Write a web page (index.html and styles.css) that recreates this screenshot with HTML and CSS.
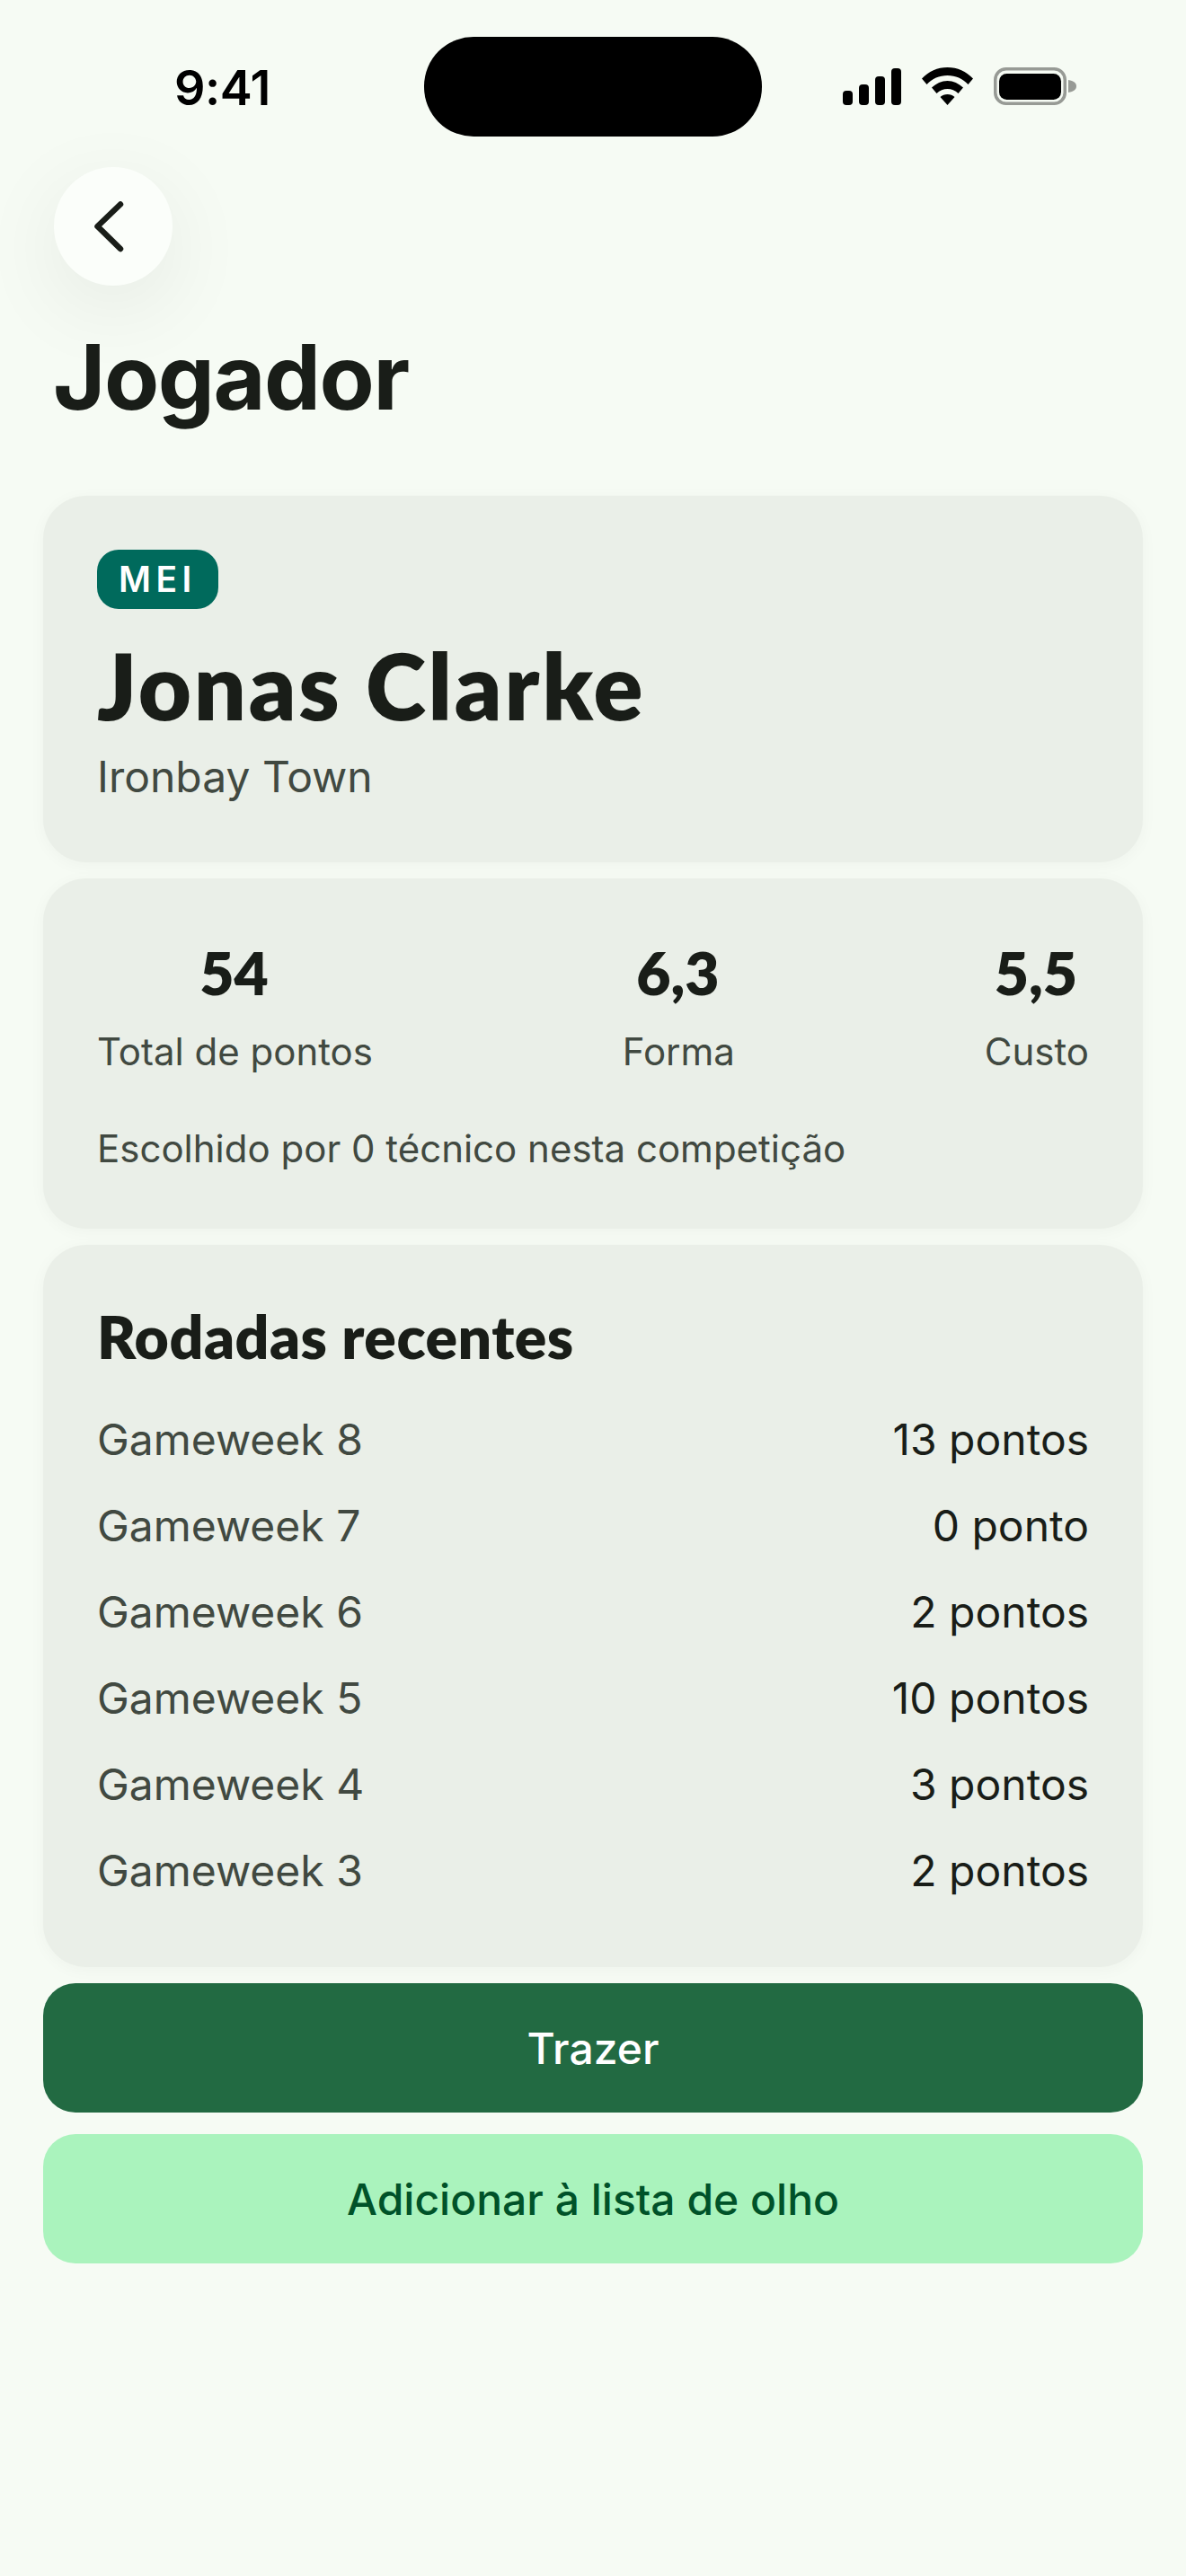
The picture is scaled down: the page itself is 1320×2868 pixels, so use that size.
FILE: index.html
```html
<!DOCTYPE html>
<html lang="pt">
<head>
<meta charset="utf-8">
<title>Jogador</title>
<link rel="stylesheet" href="styles.css">
</head>
<body>
<div class="screen">
  <div class="status">
    <span class="time">9:41</span>
    <div class="island"></div>
    <div class="status-icons">
      <svg width="65" height="41" viewBox="0 0 65 41"><rect x="0" y="25" width="11" height="16" rx="4"/><rect x="18" y="18" width="11" height="23" rx="4"/><rect x="36" y="9" width="11" height="32" rx="4"/><rect x="54" y="0" width="11" height="41" rx="4"/></svg>
      <svg width="57" height="42" viewBox="0 0 57 42"><path d="M28.500 0C39.500 0 49.500 4.500 57 12.500L51.500 19C45.500 12.500 37.500 9 28.500 9S11.500 12.500 5.500 19L0 12.500C7.500 4.500 17.500 0 28.500 0Z"/><path d="M28.500 15C35 15 41 18 46 22.500L40.500 29C37 25.500 33 24 28.500 24S20 25.500 16.500 29L11 22.500C16 18 22 15 28.500 15Z"/><path d="M28.500 30C31.500 30 34.500 31.200 36.500 33L28.500 42L20.500 33C22.500 31.200 25.500 30 28.500 30Z"/></svg>
      <svg width="92" height="42" viewBox="0 0 92 42"><rect x="1.750" y="1.750" width="77.500" height="38.500" rx="12" fill="none" stroke="#979a95" stroke-width="3.500"/><rect x="6" y="7" width="69" height="29" rx="8.500"/><path d="M83 14C89 15 92 17.500 92 21S89 27 83 28Z" fill="#979a95"/></svg>
    </div>
  </div>
  <button class="back" aria-label="Voltar">
    <svg width="48" height="66" viewBox="0 0 48 66"><path d="M32 8.500L6.500 33L32 58" fill="none" stroke="#191d18" stroke-width="6.500" stroke-linecap="round" stroke-linejoin="round"/></svg>
  </button>
  <h1 class="title">Jogador</h1>
  <main class="content">
    <section class="card hero">
      <span class="badge">MEI</span>
      <h2 class="name">Jonas Clarke</h2>
      <p class="club">Ironbay Town</p>
    </section>
    <section class="card stats">
      <div class="stat-row">
        <div class="stat"><strong class="stat-value">54</strong><span class="stat-label">Total de pontos</span></div>
        <div class="stat"><strong class="stat-value">6,3</strong><span class="stat-label">Forma</span></div>
        <div class="stat"><strong class="stat-value">5,5</strong><span class="stat-label">Custo</span></div>
      </div>
      <p class="picked">Escolhido por 0 técnico nesta competição</p>
    </section>
    <section class="card rounds">
      <h3 class="rounds-title">Rodadas recentes</h3>
      <ul class="round-list">
        <li class="round"><span class="round-name">Gameweek 8</span><span class="round-pts">13 pontos</span></li>
        <li class="round"><span class="round-name">Gameweek 7</span><span class="round-pts">0 ponto</span></li>
        <li class="round"><span class="round-name">Gameweek 6</span><span class="round-pts">2 pontos</span></li>
        <li class="round"><span class="round-name">Gameweek 5</span><span class="round-pts">10 pontos</span></li>
        <li class="round"><span class="round-name">Gameweek 4</span><span class="round-pts">3 pontos</span></li>
        <li class="round"><span class="round-name">Gameweek 3</span><span class="round-pts">2 pontos</span></li>
      </ul>
    </section>
    <div class="actions">
      <button class="btn primary">Trazer</button>
      <button class="btn secondary">Adicionar à lista de olho</button>
    </div>
  </main>
</div>
</body>
</html>
```
FILE: styles.css
```css
* { box-sizing: border-box; }
html, body { margin: 0; padding: 0; }
body { background: #f6fbf4; font-family: Inter, "Liberation Sans", sans-serif; color: #191d18; }
.screen { width: 1320px; height: 2868px; overflow: hidden; }
.status { position: relative; height: 186px; display: flex; justify-content: space-between; align-items: flex-start; }
.time { margin: 65px 0 0 194px; font-size: 54px; line-height: 65px; font-weight: 600; letter-spacing: -0.5px; color: #000; }
.island { position: absolute; left: 472px; top: 41px; width: 376px; height: 111px; border-radius: 55px; background: #000; }
.status-icons { display: flex; align-items: flex-end; gap: 23px; margin: 75px 122px 0 0; }
.status-icons svg { display: block; fill: #000; }
.back { display: flex; align-items: center; justify-content: center; width: 132px; height: 132px; margin-left: 60px; padding: 0; border: 0; border-radius: 50%; background: #fbfefa; box-shadow: 0 24px 96px rgba(0,0,0,.07); }
.title { margin: 42px 0 0 59px; font-size: 100px; line-height: 120px; font-weight: 700; letter-spacing: -1.5px; color: #191d18; }
.content { display: flex; flex-direction: column; gap: 18px; margin: 72px 48px 0; }
.card { background: #eaefe8; border-radius: 48px; padding: 60px; box-shadow: 0 3px 18px rgba(0,0,0,.035); }
.badge { display: inline-block; height: 66px; padding: 0 24px; border-radius: 24px; background: #006a5c; color: #fff; font-size: 39px; line-height: 66px; font-weight: 600; letter-spacing: 5.500px; vertical-align: top; }
.hero { height: 408px; }
.name { margin: 31px 0 0; font-family: Lato, sans-serif; font-size: 102px; line-height: 108px; font-weight: 800; letter-spacing: 2.8px; color: #191d18; }
.club { margin: 15px 0 0; font-size: 48px; line-height: 66px; color: #414941; }
.stats { height: 390px; padding-bottom: 0; }
.stat-row { display: flex; justify-content: space-between; }
.stat { display: flex; flex-direction: column; align-items: center; }
.stat-value { margin-left: -2px; font-family: Lato, sans-serif; font-size: 66px; line-height: 90px; font-weight: 800; }
.stat-label { margin-top: 13px; font-size: 42px; line-height: 60px; color: #414941; }
.picked { margin: 48px 0 0; font-size: 42px; line-height: 60px; color: #414941; }
.rounds { height: 804px; }
.rounds-title { margin: 0; font-family: Lato, sans-serif; font-size: 66px; line-height: 84px; font-weight: 800; letter-spacing: 0.5px; }
.round-list { list-style: none; margin: 24px 0 0; padding: 0; }
.round { display: flex; justify-content: space-between; height: 96px; align-items: center; font-size: 48px; }
.round-name { color: #414941; }
.round-pts { color: #191d18; }
.actions { display: flex; flex-direction: column; gap: 24px; }
.btn { height: 144px; border: 0; border-radius: 36px; font-family: Inter, sans-serif; font-size: 48px; font-weight: 500; }
.primary { background: #226a42; color: #fff; }
.secondary { background: #aaf3bd; color: #005229; }
```
